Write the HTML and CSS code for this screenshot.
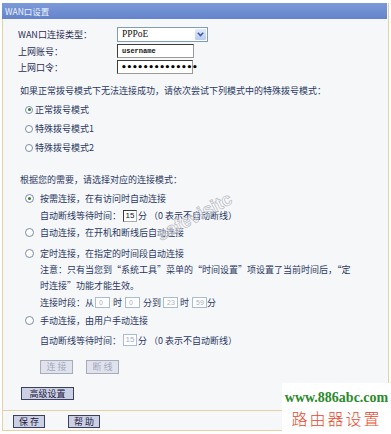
FILE: index.html
```html
<!DOCTYPE html>
<html>
<head>
<meta charset="utf-8">
<link rel="stylesheet" href="styles.css">
</head>
<body>
<div class="panel">
  <div class="head">WAN口设置</div>
  <div class="form">
    <div class="frow frow-sel">
      <span class="lbl">WAN口连接类型：</span>
      <span class="select"><span class="sel-val">PPPoE</span><span class="sel-btn"><svg width="7" height="5" viewBox="0 0 7 5"><path d="M0.8 0.8 L3.5 3.6 L6.2 0.8" fill="none" stroke="#3b5aa0" stroke-width="1.5"/></svg></span></span>
    </div>
    <div class="frow"><span class="lbl">上网账号：</span><span class="tinput">username</span></div>
    <div class="frow"><span class="lbl">上网口令：</span><span class="tinput pw">••••••••••••••</span></div>
  </div>
  <p class="para">如果正常拨号模式下无法连接成功，请依次尝试下列模式中的特殊拨号模式：</p>
  <div class="dial">
    <div class="drow"><span class="radio on"></span>正常拨号模式</div>
    <div class="drow"><span class="radio"></span>特殊拨号模式1</div>
    <div class="drow"><span class="radio"></span>特殊拨号模式2</div>
  </div>
  <p class="para para2">根据您的需要，请选择对应的连接模式：</p>
  <div class="modes">
    <div class="mr mr1"><span class="radio on"></span>按需连接，在有访问时自动连接</div>
    <div class="sub sub1">自动断线等待时间：<span class="num">15</span>分&nbsp;（0 表示不自动断线）</div>
    <div class="mr mr3"><span class="radio"></span>自动连接，在开机和断线后自动连接</div>
    <div class="mr mr4"><span class="radio"></span>定时连接，在指定的时间段自动连接</div>
    <div class="note">注意：只有当您到“系统工具”菜单的“时间设置”项设置了当前时间后，“定<br>时连接”功能才能生效。</div>
    <div class="sub period">连接时段：从<span class="tbox">0</span><span class="gap">时</span><span class="tbox">0</span><span class="gap2">分到</span><span class="tbox">23</span><span class="gap3">时</span><span class="tbox">59</span>分</div>
    <div class="mr mr5"><span class="radio"></span>手动连接，由用户手动连接</div>
    <div class="sub sub2">自动断线等待时间：<span class="num off">15</span>分&nbsp;（0 表示不自动断线）</div>
    <div class="btnrow"><span class="btn off">连 接</span><span class="btn off">断 线</span></div>
  </div>
  <div class="adv"><span class="btn wide">高级设置</span></div>
  <div class="savebar"><span class="btn">保 存</span><span class="btn">帮 助</span></div>
</div>
<div class="stamp">safevisitc</div>
<div class="wm">
  <div class="wm-url">www.886abc.com</div>
  <div class="wm-cn">路由器设置</div>
</div>
</body>
</html>
```
FILE: styles.css
```css
html, body {
  margin: 0;
  padding: 0;
}
body {
  width: 391px;
  height: 434px;
  position: relative;
  overflow: hidden;
  background: #ffffff;
  font-family: "Noto Sans CJK SC", "Noto Sans", sans-serif;
  font-size: 9px;
  color: #2a3863;
}
.panel {
  margin: 3px 0 0 2px;
  width: 385px;
  height: 427px;
  border: 1px solid #e4d1a4;
  border-top: none;
  background: #f6f7f9;
  display: flex;
  flex-direction: column;
}
.head {
  height: 16px;
  line-height: 16px;
  margin: 0 1px 0 -1px;
  padding-left: 3px;
  background: linear-gradient(#7d9bd9, #6383cb);
  color: #eef2fb;
  font-size: 8.5px;
}
.form {
  margin-top: 8px;
  padding-left: 15px;
  display: flex;
  flex-direction: column;
  gap: 2px;
}
.frow {
  display: flex;
  align-items: center;
  height: 14px;
}
.frow-sel {
  height: 15px;
}
.lbl {
  width: 99px;
  color: #2b2f55;
}
.select {
  width: 91px;
  height: 15px;
  box-sizing: border-box;
  border: 1px solid #7f9db9;
  background: #fff;
  display: flex;
}
.sel-val {
  flex: 1;
  padding-left: 4px;
  font-family: "Liberation Serif", serif;
  font-size: 9.5px;
  line-height: 13px;
  color: #111;
}
.sel-btn {
  width: 11px;
  margin: 1px;
  background: linear-gradient(#e3ebfc, #b9cbf1);
  border-radius: 1px;
  display: flex;
  align-items: center;
  justify-content: center;
}
.tinput {
  width: 77px;
  height: 14px;
  box-sizing: border-box;
  border: 1px solid #3c3c3c;
  border-right-color: #9a9a9a;
  border-bottom-color: #9a9a9a;
  background: #fff;
  padding-left: 4px;
  font-family: "Liberation Mono", monospace;
  font-size: 7px;
  font-weight: bold;
  line-height: 12px;
  color: #111;
}
.tinput.pw {
  width: 76px;
  padding-left: 3px;
  font-family: "DejaVu Sans", sans-serif;
  font-size: 9px;
  letter-spacing: -0.3px;
  color: #000;
}
.para {
  margin: 8px 0 0 17px;
  height: 18px;
  line-height: 18px;
}
.para2 {
  margin-top: 14px;
}
.dial {
  padding-left: 22px;
}
.drow {
  height: 19px;
  display: flex;
  align-items: center;
}
.radio {
  display: inline-block;
  width: 8px;
  height: 8px;
  box-sizing: border-box;
  border: 1px solid #7c8ba6;
  border-radius: 50%;
  background: #fff;
  margin-right: 2px;
  position: relative;
}
.radio.on::after {
  content: "";
  position: absolute;
  left: 1.5px;
  top: 1.5px;
  width: 3px;
  height: 3px;
  border-radius: 50%;
  background: #2f7d3a;
}
.modes {
  padding-left: 22px;
  display: flex;
  flex-direction: column;
}
.mr {
  height: 18px;
  display: flex;
  align-items: center;
}
.mr .radio {
  width: 9px;
  height: 9px;
  margin-right: 6px;
}
.mr .radio.on::after {
  left: 2px;
  top: 2px;
}
.mr3 { height: 16px; }
.mr4 { margin-top: 4px; }
.mr5 { margin-top: 1px; }
.sub {
  padding-left: 15px;
  height: 17px;
  display: flex;
  align-items: center;
  white-space: nowrap;
}
.sub2 {
  margin-top: 2px;
  height: 18px;
}
.num {
  display: inline-block;
  width: 14px;
  height: 12px;
  box-sizing: border-box;
  border: 1px solid #3c3c3c;
  border-right-color: #aaa;
  border-bottom-color: #aaa;
  background: #fff;
  font-family: "Liberation Sans", sans-serif;
  font-size: 8px;
  line-height: 10px;
  text-align: center;
  color: #111;
  margin: 0 1px 0 2px;
}
.num.off {
  border-color: #a9bcd2;
  color: #a9b0c4;
}
.note {
  padding-left: 15px;
  line-height: 16px;
  white-space: nowrap;
}
.period {
  height: 16px;
}
.tbox {
  display: inline-block;
  width: 15px;
  height: 11px;
  box-sizing: border-box;
  border: 1px solid #a9bcd2;
  background: #fff;
  font-family: "Liberation Sans", sans-serif;
  font-size: 7px;
  line-height: 9px;
  text-align: left;
  padding-left: 3px;
  color: #a9b0c4;
  margin-left: 1px;
}
.gap { margin: 0 2px 0 3px; }
.gap2 { margin: 0 1px 0 3px; }
.gap3 { margin: 0 2px 0 2px; }
.btnrow {
  margin-top: 11px;
  padding-left: 15px;
  display: flex;
  gap: 13px;
}
.btn {
  display: inline-block;
  width: 33px;
  height: 14px;
  box-sizing: border-box;
  border: 1px solid #3d3f5e;
  background: #ccd0e4;
  color: #1d2040;
  text-align: center;
  line-height: 12px;
  font-size: 9px;
}
.btn.off {
  border-color: #a7abbd;
  background: #e1e3ec;
  color: #a2a8c0;
}
.btn.wide {
  width: 53px;
  height: 13px;
  line-height: 11px;
}
.adv {
  margin-top: 13px;
  padding-left: 18px;
  display: flex;
}
.savebar {
  margin-top: 10px;
  border-top: 1px solid #e4d1a4;
  padding: 4px 0 0 10px;
  display: flex;
  gap: 23px;
}
.savebar .btn {
  width: 32px;
  height: 13px;
  line-height: 11px;
}
.stamp {
  position: absolute;
  left: 158px;
  top: 226px;
  width: 100px;
  height: 20px;
  line-height: 20px;
  font-family: "Liberation Sans", sans-serif;
  font-size: 18px;
  font-weight: bold;
  color: rgba(255, 255, 255, 0.35);
  -webkit-text-stroke: 0.7px #b9bcc4;
  transform: rotate(-28deg);
  transform-origin: 0 10px;
  white-space: nowrap;
}
.wm {
  position: absolute;
  left: 282px;
  top: 383px;
  width: 109px;
  height: 51px;
  background: #fff;
  text-align: center;
}
.wm-url {
  margin-top: 7px;
  font-family: "Liberation Serif", serif;
  font-weight: bold;
  font-size: 14px;
  line-height: 15px;
  color: #2c8a2c;
}
.wm-cn {
  margin-top: 4px;
  font-family: "Noto Sans CJK SC", sans-serif;
  font-weight: 300;
  font-size: 16px;
  line-height: 18px;
  color: #e64a2e;
  letter-spacing: 2px;
}
```
